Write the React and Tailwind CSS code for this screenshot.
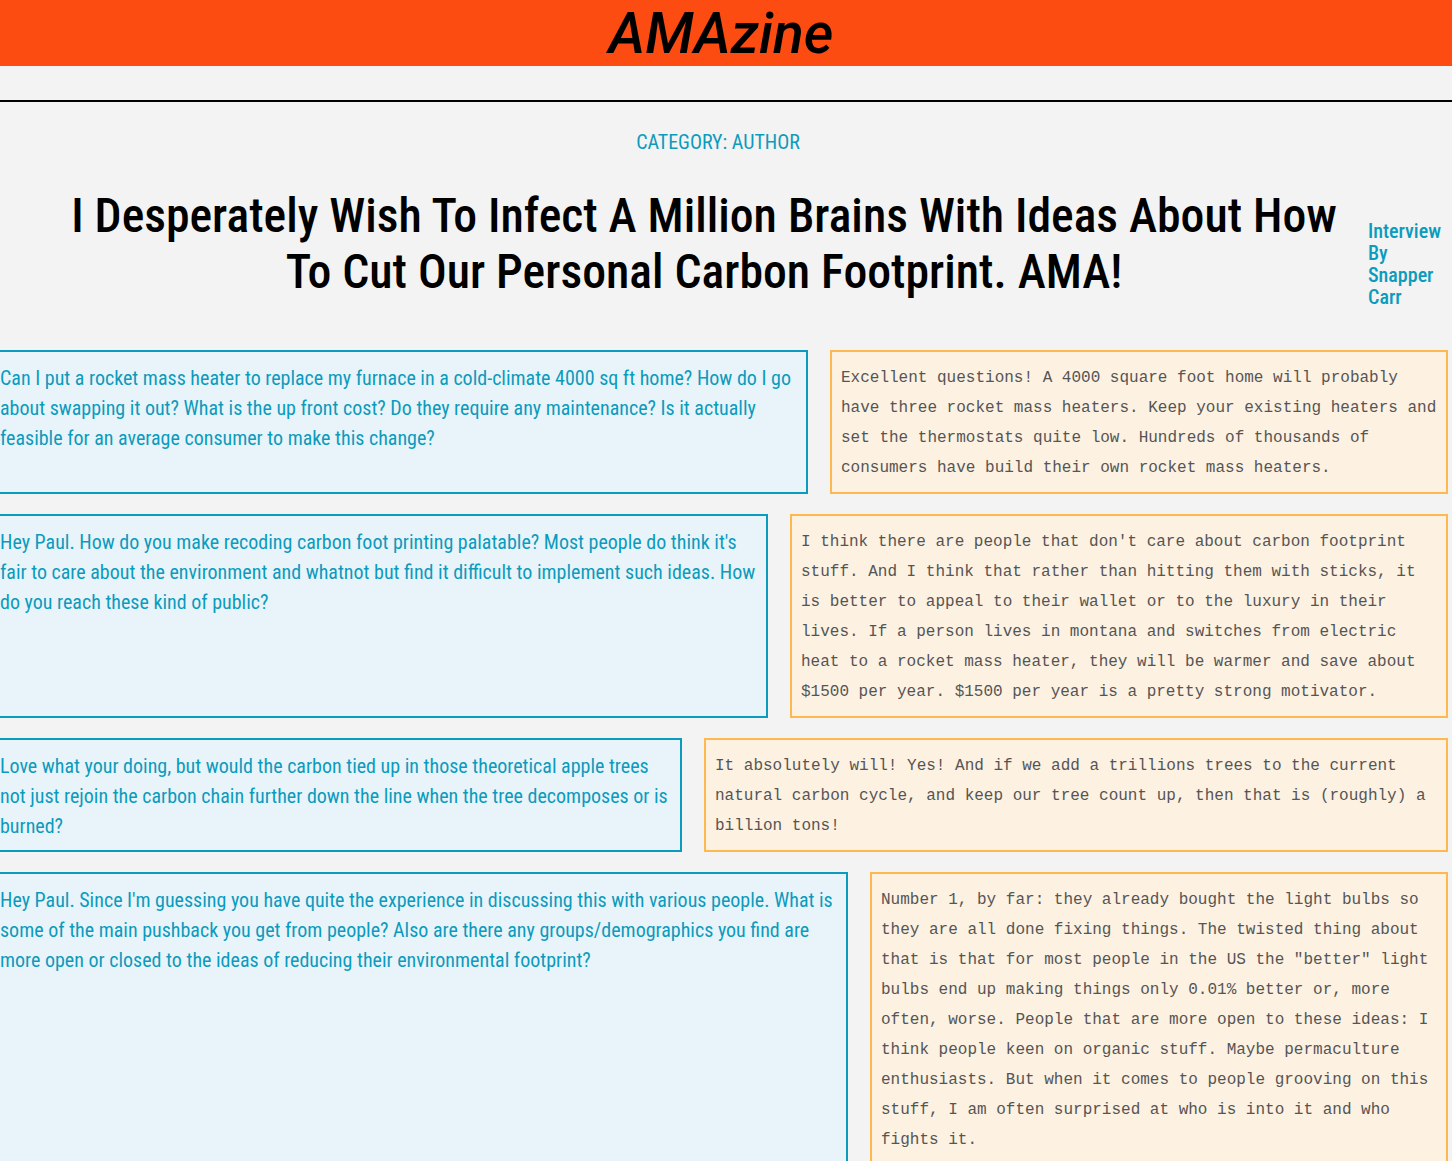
import React from 'react';

const qa = [
  {
    q: "Can I put a rocket mass heater to replace my furnace in a cold-climate 4000 sq ft home? How do I go about swapping it out? What is the up front cost? Do they require any maintenance? Is it actually feasible for an average consumer to make this change?",
    a: "Excellent questions! A 4000 square foot home will probably have three rocket mass heaters. Keep your existing heaters and set the thermostats quite low. Hundreds of thousands of consumers have build their own rocket mass heaters.",
    aw: 'w-[618px]',
  },
  {
    q: "Hey Paul. How do you make recoding carbon foot printing palatable? Most people do think it's fair to care about the environment and whatnot but find it difficult to implement such ideas. How do you reach these kind of public?",
    a: "I think there are people that don't care about carbon footprint stuff. And I think that rather than hitting them with sticks, it is better to appeal to their wallet or to the luxury in their lives. If a person lives in montana and switches from electric heat to a rocket mass heater, they will be warmer and save about $1500 per year. $1500 per year is a pretty strong motivator.",
    aw: 'w-[658px]',
  },
  {
    q: "Love what your doing, but would the carbon tied up in those theoretical apple trees not just rejoin the carbon chain further down the line when the tree decomposes or is burned?",
    a: "It absolutely will! Yes! And if we add a trillions trees to the current natural carbon cycle, and keep our tree count up, then that is (roughly) a billion tons!",
    aw: 'w-[744px]',
  },
  {
    q: "Hey Paul. Since I'm guessing you have quite the experience in discussing this with various people. What is some of the main pushback you get from people? Also are there any groups/demographics you find are more open or closed to the ideas of reducing their environmental footprint?",
    a: "Number 1, by far: they already bought the light bulbs so they are all done fixing things. The twisted thing about that is that for most people in the US the \"better\" light bulbs end up making things only 0.01% better or, more often, worse. People that are more open to these ideas: I think people keen on organic stuff. Maybe permaculture enthusiasts. But when it comes to people grooving on this stuff, I am often surprised at who is into it and who fights it.",
    aw: 'w-[578px]',
  },
];

const cond = { fontFamily: 'Roboto, "Liberation Sans", sans-serif' };

export default function App() {
  return (
    <div className="min-h-screen bg-[#f3f3f3] overflow-hidden">
      <header className="h-[66px] bg-[#fc4c12] flex items-center justify-center pr-[10px]">
        <h1 className="text-[57px] italic font-medium text-black leading-none" style={cond}>
          AMAzine
        </h1>
      </header>
      <div className="mt-[34px] border-t-2 border-black"></div>

      <div className="pt-[25px] pr-[16px] text-center">
        <p className="text-[20px] font-stretch-condensed text-[#0b9bbd] uppercase" style={cond}>
          Category: Author
        </p>
      </div>

      <div className="flex mt-[31px]">
        <div className="flex-1 pl-[44px] pr-[4px] text-center">
          <h2 className="text-[47.7px] leading-[56px] font-medium font-stretch-condensed text-black" style={cond}>
            I Desperately Wish To Infect A Million Brains With Ideas About How To Cut Our Personal Carbon Footprint. AMA!
          </h2>
        </div>
        <div className="w-[84px] shrink-0 pt-[32px]">
          <p className="text-[20px] leading-[22px] font-medium font-stretch-condensed text-[#0b9bbd]" style={cond}>
            Interview By Snapper Carr
          </p>
        </div>
      </div>

      <div className="mt-[42px] flex flex-col gap-[20px] pr-[4px]">
        {qa.map((item, i) => (
          <div key={i} className="flex gap-[22px] items-stretch">
            <div className="flex-1 -ml-[12px] border-2 border-[#0a9bbf] bg-[#e9f4fa] px-[10px] pt-[11px] pb-[9px]">
              <p className="text-[20px] leading-[30px] font-stretch-condensed text-[#0b9bbd]" style={cond}>
                {item.q}
              </p>
            </div>
            <div className={`${item.aw} shrink-0 border-2 border-[#fdb94f] bg-[#fdf1e2] px-[9px] pt-[11px] pb-[9px]`}>
              <p className="text-[16px] leading-[30px] text-[#555]" style={{ fontFamily: '"Liberation Mono", "DejaVu Sans Mono", monospace' }}>
                {item.a}
              </p>
            </div>
          </div>
        ))}
      </div>
    </div>
  );
}
